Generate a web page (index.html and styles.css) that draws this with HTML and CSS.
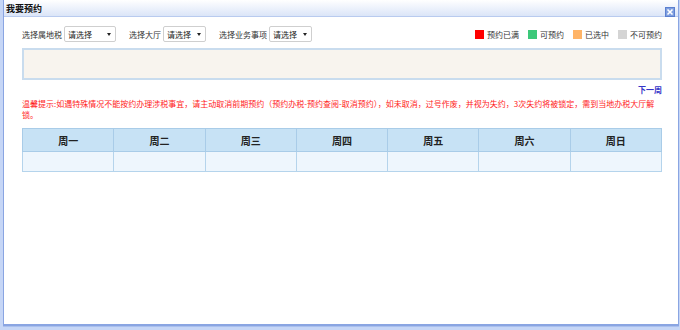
FILE: index.html
```html
<!DOCTYPE html>
<html lang="zh-CN">
<head>
<meta charset="utf-8">
<title>我要预约</title>
<link rel="stylesheet" href="styles.css">
</head>
<body>
<div class="win">
  <div class="titlebar">
    <span class="title">我要预约</span>
    <span class="close"><svg width="10" height="10" viewBox="0 0 10 10"><rect x="0.5" y="0.5" width="9" height="9" fill="#7f9fe0" stroke="#5b7fcf"/><path d="M2.5 2.5 L7.5 7.5 M7.5 2.5 L2.5 7.5" stroke="#fff" stroke-width="1.6"/></svg></span>
  </div>
  <div class="content">
    <div class="filters">
      <div class="field"><span class="lbl">选择属地税</span><div class="sel w52"><span>请选择</span><i class="arr"></i></div></div>
      <div class="field"><span class="lbl">选择大厅</span><div class="sel w43"><span>请选择</span><i class="arr"></i></div></div>
      <div class="field"><span class="lbl">选择业务事项</span><div class="sel w43"><span>请选择</span><i class="arr"></i></div></div>
      <div class="legend">
        <span class="lg"><i class="sq red"></i>预约已满</span>
        <span class="lg"><i class="sq green"></i>可预约</span>
        <span class="lg"><i class="sq orange"></i>已选中</span>
        <span class="lg"><i class="sq grey"></i>不可预约</span>
      </div>
    </div>
    <div class="datebox"></div>
    <div class="nav"><a class="next">下一周</a></div>
    <p class="tip">温馨提示:如遇特殊情况不能按约办理涉税事宜，请主动取消前期预约（预约办税-预约查阅-取消预约），如未取消，过号作废，并视为失约，3次失约将被锁定，需到当地办税大厅解锁。</p>
    <table class="week">
      <thead>
        <tr><th>周一</th><th>周二</th><th>周三</th><th>周四</th><th>周五</th><th>周六</th><th>周日</th></tr>
      </thead>
      <tbody>
        <tr><td></td><td></td><td></td><td></td><td></td><td></td><td></td></tr>
      </tbody>
    </table>
  </div>
</div>
</body>
</html>
```
FILE: styles.css
```css
html, body {
  margin: 0;
  padding: 0;
}
body {
  width: 680px;
  height: 330px;
  background: #c6d6f6;
  font-family: "Noto Sans CJK SC", "Liberation Sans", sans-serif;
  font-size: 8px;
  color: #333;
  overflow: hidden;
}
.win {
  box-sizing: border-box;
  margin-left: 3px;
  width: 676px;
  height: 326px;
  background: #fff;
  border-left: 1px solid #8aa5e2;
  border-right: 1px solid #8aa5e2;
  border-bottom: 2px solid #8aa5e2;
  box-shadow: 0 1px 0 #aac0ee;
}
.titlebar {
  height: 17px;
  box-sizing: border-box;
  border-bottom: 1px solid #b9cbef;
  background: linear-gradient(#ffffff, #dbe5f8);
  display: flex;
  align-items: center;
  justify-content: space-between;
  padding: 0 3px 0 2px;
}
.title {
  font-weight: bold;
  font-size: 9px;
  color: #111;
  line-height: 10px;
  margin-top: 2px;
}
.close {
  display: flex;
  margin-top: 7px;
}
.content {
  padding: 0 16px 0 18px;
}
.filters {
  display: flex;
  align-items: center;
  margin-top: 9px;
  height: 16px;
}
.field {
  display: flex;
  align-items: center;
  margin-right: 13px;
}
.lbl {
  color: #333;
  margin-right: 2px;
}
.sel {
  box-sizing: border-box;
  height: 16px;
  border: 1px solid #cfcfcf;
  border-radius: 2px;
  display: flex;
  align-items: center;
  justify-content: space-between;
  padding: 0 4px 0 3px;
  color: #222;
}
.w52 { width: 52px; }
.w43 { width: 43px; }
.arr {
  width: 0;
  height: 0;
  border-left: 2.5px solid transparent;
  border-right: 2.5px solid transparent;
  border-top: 3px solid #222;
}
.legend {
  margin-left: auto;
  display: flex;
  align-items: center;
}
.lg {
  display: flex;
  align-items: center;
  margin-left: 9px;
  color: #333;
}
.sq {
  width: 9px;
  height: 9px;
  margin-right: 3px;
}
.red { background: #ff0000; }
.green { background: #3cc87a; }
.orange { background: #ffb467; }
.grey { background: #d4d4d4; }
.datebox {
  box-sizing: border-box;
  margin-top: 6px;
  height: 32px;
  background: #f8f4ee;
  border: 2px solid #c9dcee;
}
.nav {
  display: flex;
  justify-content: flex-end;
  margin-top: 5px;
  height: 10px;
  line-height: 10px;
}
.next {
  color: #3535c8;
  font-weight: bold;
  font-size: 8px;
}
.tip {
  margin: 3px 0 0 0;
  color: #ff1a1a;
  line-height: 11px;
  font-size: 8px;
}
.week {
  margin-top: 8px;
  width: 100%;
  border-collapse: collapse;
  table-layout: fixed;
  border: 1px solid #a9cce8;
}
.week th {
  height: 22px;
  background: #c7e2f5;
  border: 1px solid #a9cce8;
  font-size: 10px;
  font-weight: bold;
  color: #222;
  padding: 0;
}
.week td {
  height: 19px;
  background: #eef6fd;
  border: 1px solid #b5d4ec;
  padding: 0;
}
```
